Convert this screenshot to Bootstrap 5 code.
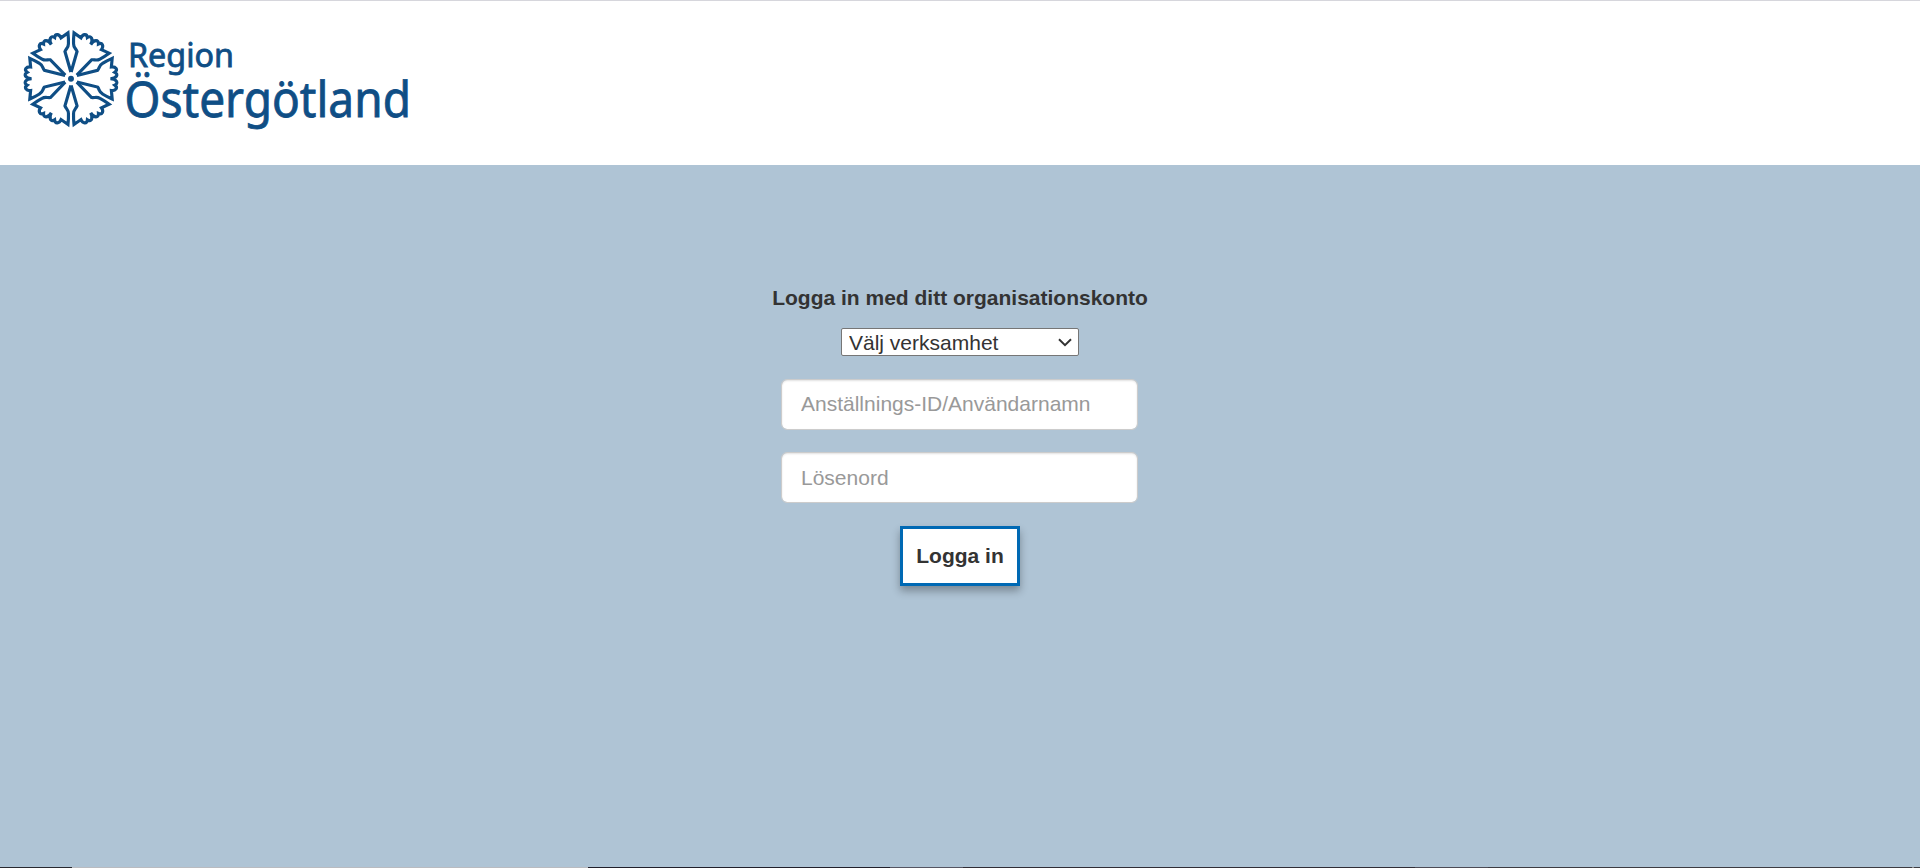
<!DOCTYPE html>
<html lang="sv">
<head>
<meta charset="utf-8">
<meta name="viewport" content="width=device-width, initial-scale=1">
<title>Region Östergötland</title>
<link href="https://cdn.jsdelivr.net/npm/bootstrap@5.3.0/dist/css/bootstrap.min.css" rel="stylesheet">
<style>
body{background:#afc4d5;color:#333;font-family:"Liberation Sans",Arial,sans-serif;font-size:21px;overflow:hidden}
.site-head{height:165px;border-top:1px solid #d6d6dc}
.brand-logo{width:420px;height:120px;margin:19px 0 0 10px}
.login-title{font-size:21px;line-height:24px;margin:121px 0 18px}
.unit-select{appearance:none;width:238px;height:28px;border:1px solid #767676;border-radius:2px;background:#fff url("data:image/svg+xml,%3Csvg xmlns='http://www.w3.org/2000/svg' width='14' height='9'%3E%3Cpath d='M1 1.2l6 6 6-6' fill='none' stroke='%23333' stroke-width='2'/%3E%3C/svg%3E") no-repeat right 6px center;color:#333;font-size:21px;line-height:25px;padding:1px 0 0 7px;margin-bottom:23px}
.login-field{width:357px;height:51px;border:1px solid #ccc;border-radius:6px;font-size:21px;line-height:30px;padding:6px 19px 8px;margin:0 1px 22px 0;box-shadow:inset 0 1px 2px rgba(0,0,0,.12)}
.login-field[type=password]{padding:7px 19px}
.login-field::placeholder{color:#999}
.login-btn{width:120px;height:60px;border:3px solid #0069b4;border-radius:0;background:#fff;color:#333;font-size:21px;padding:0;margin-top:1px;box-shadow:0 5px 8px rgba(0,0,0,.3)}
.bottom-edge{height:1px;background:linear-gradient(90deg,#292930 72px,#b9bbc0 72px 588px,#211f2a 588px 890px,#555562 890px 963px,#302d35 963px 1415px,#4c4b55 1415px 1488px,#3d3c42 1488px 1912px,#888 1912px 1914px,#3d3c42 1914px)}
</style>
</head>
<body class="vh-100 d-flex flex-column">
<header class="site-head bg-white">
<svg class="brand-logo d-block" viewBox="10 20 420 120" role="img" aria-label="Region Östergötland">
<defs><path id="petal" d="M6-3.3 27-8.5C29-11 28.5-13.5 32-15.5Q36-18 41.8-20.6L41-12C45.5-12.5 48-9 44.5-6.5C48.5-4.5 46.5-.3 40 0C46.5.3 48.5 4.5 44.5 6.5C48 9 45.5 12.5 41 12L41.8 20.6Q36 18 32 15.5C28.5 13.5 29 11 27 8.5L6 3.3"/></defs>
<g transform="translate(71 78.7) scale(.985)" fill="none" stroke="#0f4e85" stroke-width="3.2">
<use href="#petal"/><use href="#petal" transform="rotate(60)"/><use href="#petal" transform="rotate(120)"/><use href="#petal" transform="rotate(180)"/><use href="#petal" transform="rotate(240)"/><use href="#petal" transform="rotate(300)"/>
<circle r="3" fill="#0f4e85" stroke="none"/></g>
<g fill="#0f4e85" stroke="#0f4e85" stroke-width=".8" font-family="'Noto Sans',sans-serif">
<text x="128" y="66.7" font-size="33" textLength="106" lengthAdjust="spacingAndGlyphs">Region</text>
<text x="124.5" y="116.6" font-size="49" textLength="286.5" lengthAdjust="spacingAndGlyphs">Östergötland</text></g>
</svg>
</header>
<main class="flex-grow-1">
<form class="d-flex flex-column align-items-center">
<h1 class="login-title fw-bold">Logga in med ditt organisationskonto</h1>
<select class="unit-select" aria-label="Verksamhet"><option>Välj verksamhet</option></select>
<input class="form-control login-field" type="text" placeholder="Anställnings-ID/Användarnamn">
<input class="form-control login-field" type="password" placeholder="Lösenord">
<button class="btn login-btn fw-bold" type="button">Logga in</button>
</form>
</main>
<div class="bottom-edge"></div>
<script src="https://cdn.jsdelivr.net/npm/bootstrap@5.3.0/dist/js/bootstrap.bundle.min.js"></script>
</body>
</html>
